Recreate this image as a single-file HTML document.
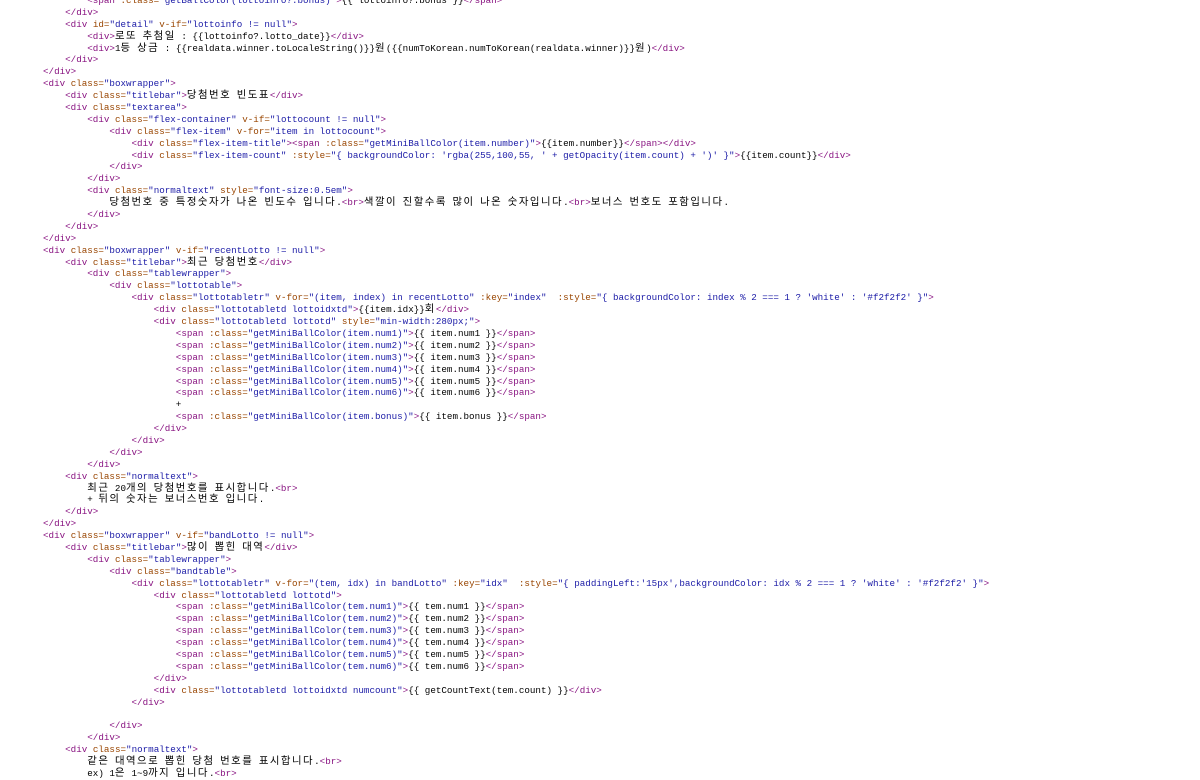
<!DOCTYPE html>
<html><head><meta charset="utf-8"><style>
html,body{margin:0;padding:0;background:#fff;width:1200px;height:772px;overflow:hidden}
pre{margin:0;position:absolute;left:43px;top:-5px;font-family:"Liberation Mono","Noto Sans CJK KR",monospace;font-size:9.22px;line-height:11.89px;color:#000;white-space:pre}
.t{color:#881280}.a{color:#994500}.v{color:#1a1aa6}
.k{font-family:"Noto Sans CJK KR",sans-serif;font-size:10.4px;line-height:1px;letter-spacing:1.5px}
</style></head><body><pre>        <span class="t">&lt;span</span> <span class="a">:class=</span><span class="v">"getBallColor(lottoinfo?.bonus)"</span><span class="t">&gt;</span>{{ lottoinfo?.bonus }}<span class="t">&lt;/span&gt;</span>
    <span class="t">&lt;/div&gt;</span>
    <span class="t">&lt;div</span> <span class="a">id=</span><span class="v">"detail"</span> <span class="a">v-if=</span><span class="v">"lottoinfo != null"</span><span class="t">&gt;</span>
        <span class="t">&lt;div&gt;</span><span class="k">로또</span> <span class="k">추첨일</span> : {{lottoinfo?.lotto_date}}<span class="t">&lt;/div&gt;</span>
        <span class="t">&lt;div&gt;</span>1<span class="k">등</span> <span class="k">상금</span> : {{realdata.winner.toLocaleString()}}<span class="k">원</span>({{numToKorean.numToKorean(realdata.winner)}}<span class="k">원</span>)<span class="t">&lt;/div&gt;</span>
    <span class="t">&lt;/div&gt;</span>
<span class="t">&lt;/div&gt;</span>
<span class="t">&lt;div</span> <span class="a">class=</span><span class="v">"boxwrapper"</span><span class="t">&gt;</span>
    <span class="t">&lt;div</span> <span class="a">class=</span><span class="v">"titlebar"</span><span class="t">&gt;</span><span class="k">당첨번호</span> <span class="k">빈도표</span><span class="t">&lt;/div&gt;</span>
    <span class="t">&lt;div</span> <span class="a">class=</span><span class="v">"textarea"</span><span class="t">&gt;</span>
        <span class="t">&lt;div</span> <span class="a">class=</span><span class="v">"flex-container"</span> <span class="a">v-if=</span><span class="v">"lottocount != null"</span><span class="t">&gt;</span>
            <span class="t">&lt;div</span> <span class="a">class=</span><span class="v">"flex-item"</span> <span class="a">v-for=</span><span class="v">"item in lottocount"</span><span class="t">&gt;</span>
                <span class="t">&lt;div</span> <span class="a">class=</span><span class="v">"flex-item-title"</span><span class="t">&gt;&lt;span</span> <span class="a">:class=</span><span class="v">"getMiniBallColor(item.number)"</span><span class="t">&gt;</span>{{item.number}}<span class="t">&lt;/span&gt;&lt;/div&gt;</span>
                <span class="t">&lt;div</span> <span class="a">class=</span><span class="v">"flex-item-count"</span> <span class="a">:style=</span><span class="v">"{ backgroundColor: 'rgba(255,100,55, ' + getOpacity(item.count) + ')' }"</span><span class="t">&gt;</span>{{item.count}}<span class="t">&lt;/div&gt;</span>
            <span class="t">&lt;/div&gt;</span>
        <span class="t">&lt;/div&gt;</span>
        <span class="t">&lt;div</span> <span class="a">class=</span><span class="v">"normaltext"</span> <span class="a">style=</span><span class="v">"font-size:0.5em"</span><span class="t">&gt;</span>
            <span class="k">당첨번호</span> <span class="k">중</span> <span class="k">특정숫자가</span> <span class="k">나온</span> <span class="k">빈도수</span> <span class="k">입니다</span>.<span class="t">&lt;br&gt;</span><span class="k">색깔이</span> <span class="k">진할수록</span> <span class="k">많이</span> <span class="k">나온</span> <span class="k">숫자입니다</span>.<span class="t">&lt;br&gt;</span><span class="k">보너스</span> <span class="k">번호도</span> <span class="k">포함입니다</span>.
        <span class="t">&lt;/div&gt;</span>
    <span class="t">&lt;/div&gt;</span>
<span class="t">&lt;/div&gt;</span>
<span class="t">&lt;div</span> <span class="a">class=</span><span class="v">"boxwrapper"</span> <span class="a">v-if=</span><span class="v">"recentLotto != null"</span><span class="t">&gt;</span>
    <span class="t">&lt;div</span> <span class="a">class=</span><span class="v">"titlebar"</span><span class="t">&gt;</span><span class="k">최근</span> <span class="k">당첨번호</span><span class="t">&lt;/div&gt;</span>
        <span class="t">&lt;div</span> <span class="a">class=</span><span class="v">"tablewrapper"</span><span class="t">&gt;</span>
            <span class="t">&lt;div</span> <span class="a">class=</span><span class="v">"lottotable"</span><span class="t">&gt;</span>
                <span class="t">&lt;div</span> <span class="a">class=</span><span class="v">"lottotabletr"</span> <span class="a">v-for=</span><span class="v">"(item, index) in recentLotto"</span> <span class="a">:key=</span><span class="v">"index"</span>  <span class="a">:style=</span><span class="v">"{ backgroundColor: index % 2 === 1 ? 'white' : '#f2f2f2' }"</span><span class="t">&gt;</span>
                    <span class="t">&lt;div</span> <span class="a">class=</span><span class="v">"lottotabletd lottoidxtd"</span><span class="t">&gt;</span>{{item.idx}}<span class="k">회</span><span class="t">&lt;/div&gt;</span>
                    <span class="t">&lt;div</span> <span class="a">class=</span><span class="v">"lottotabletd lottotd"</span> <span class="a">style=</span><span class="v">"min-width:280px;"</span><span class="t">&gt;</span>
                        <span class="t">&lt;span</span> <span class="a">:class=</span><span class="v">"getMiniBallColor(item.num1)"</span><span class="t">&gt;</span>{{ item.num1 }}<span class="t">&lt;/span&gt;</span>
                        <span class="t">&lt;span</span> <span class="a">:class=</span><span class="v">"getMiniBallColor(item.num2)"</span><span class="t">&gt;</span>{{ item.num2 }}<span class="t">&lt;/span&gt;</span>
                        <span class="t">&lt;span</span> <span class="a">:class=</span><span class="v">"getMiniBallColor(item.num3)"</span><span class="t">&gt;</span>{{ item.num3 }}<span class="t">&lt;/span&gt;</span>
                        <span class="t">&lt;span</span> <span class="a">:class=</span><span class="v">"getMiniBallColor(item.num4)"</span><span class="t">&gt;</span>{{ item.num4 }}<span class="t">&lt;/span&gt;</span>
                        <span class="t">&lt;span</span> <span class="a">:class=</span><span class="v">"getMiniBallColor(item.num5)"</span><span class="t">&gt;</span>{{ item.num5 }}<span class="t">&lt;/span&gt;</span>
                        <span class="t">&lt;span</span> <span class="a">:class=</span><span class="v">"getMiniBallColor(item.num6)"</span><span class="t">&gt;</span>{{ item.num6 }}<span class="t">&lt;/span&gt;</span>
                        +
                        <span class="t">&lt;span</span> <span class="a">:class=</span><span class="v">"getMiniBallColor(item.bonus)"</span><span class="t">&gt;</span>{{ item.bonus }}<span class="t">&lt;/span&gt;</span>
                    <span class="t">&lt;/div&gt;</span>
                <span class="t">&lt;/div&gt;</span>
            <span class="t">&lt;/div&gt;</span>
        <span class="t">&lt;/div&gt;</span>
    <span class="t">&lt;div</span> <span class="a">class=</span><span class="v">"normaltext"</span><span class="t">&gt;</span>
        <span class="k">최근</span> 20<span class="k">개의</span> <span class="k">당첨번호를</span> <span class="k">표시합니다</span>.<span class="t">&lt;br&gt;</span>
        + <span class="k">뒤의</span> <span class="k">숫자는</span> <span class="k">보너스번호</span> <span class="k">입니다</span>.
    <span class="t">&lt;/div&gt;</span>
<span class="t">&lt;/div&gt;</span>
<span class="t">&lt;div</span> <span class="a">class=</span><span class="v">"boxwrapper"</span> <span class="a">v-if=</span><span class="v">"bandLotto != null"</span><span class="t">&gt;</span>
    <span class="t">&lt;div</span> <span class="a">class=</span><span class="v">"titlebar"</span><span class="t">&gt;</span><span class="k">많이</span> <span class="k">뽑힌</span> <span class="k">대역</span><span class="t">&lt;/div&gt;</span>
        <span class="t">&lt;div</span> <span class="a">class=</span><span class="v">"tablewrapper"</span><span class="t">&gt;</span>
            <span class="t">&lt;div</span> <span class="a">class=</span><span class="v">"bandtable"</span><span class="t">&gt;</span>
                <span class="t">&lt;div</span> <span class="a">class=</span><span class="v">"lottotabletr"</span> <span class="a">v-for=</span><span class="v">"(tem, idx) in bandLotto"</span> <span class="a">:key=</span><span class="v">"idx"</span>  <span class="a">:style=</span><span class="v">"{ paddingLeft:'15px',backgroundColor: idx % 2 === 1 ? 'white' : '#f2f2f2' }"</span><span class="t">&gt;</span>
                    <span class="t">&lt;div</span> <span class="a">class=</span><span class="v">"lottotabletd lottotd"</span><span class="t">&gt;</span>
                        <span class="t">&lt;span</span> <span class="a">:class=</span><span class="v">"getMiniBallColor(tem.num1)"</span><span class="t">&gt;</span>{{ tem.num1 }}<span class="t">&lt;/span&gt;</span>
                        <span class="t">&lt;span</span> <span class="a">:class=</span><span class="v">"getMiniBallColor(tem.num2)"</span><span class="t">&gt;</span>{{ tem.num2 }}<span class="t">&lt;/span&gt;</span>
                        <span class="t">&lt;span</span> <span class="a">:class=</span><span class="v">"getMiniBallColor(tem.num3)"</span><span class="t">&gt;</span>{{ tem.num3 }}<span class="t">&lt;/span&gt;</span>
                        <span class="t">&lt;span</span> <span class="a">:class=</span><span class="v">"getMiniBallColor(tem.num4)"</span><span class="t">&gt;</span>{{ tem.num4 }}<span class="t">&lt;/span&gt;</span>
                        <span class="t">&lt;span</span> <span class="a">:class=</span><span class="v">"getMiniBallColor(tem.num5)"</span><span class="t">&gt;</span>{{ tem.num5 }}<span class="t">&lt;/span&gt;</span>
                        <span class="t">&lt;span</span> <span class="a">:class=</span><span class="v">"getMiniBallColor(tem.num6)"</span><span class="t">&gt;</span>{{ tem.num6 }}<span class="t">&lt;/span&gt;</span>
                    <span class="t">&lt;/div&gt;</span>
                    <span class="t">&lt;div</span> <span class="a">class=</span><span class="v">"lottotabletd lottoidxtd numcount"</span><span class="t">&gt;</span>{{ getCountText(tem.count) }}<span class="t">&lt;/div&gt;</span>
                <span class="t">&lt;/div&gt;</span>

            <span class="t">&lt;/div&gt;</span>
        <span class="t">&lt;/div&gt;</span>
    <span class="t">&lt;div</span> <span class="a">class=</span><span class="v">"normaltext"</span><span class="t">&gt;</span>
        <span class="k">같은</span> <span class="k">대역으로</span> <span class="k">뽑힌</span> <span class="k">당첨</span> <span class="k">번호를</span> <span class="k">표시합니다</span>.<span class="t">&lt;br&gt;</span>
        ex) 1<span class="k">은</span> 1~9<span class="k">까지</span> <span class="k">입니다</span>.<span class="t">&lt;br&gt;</span>
</pre></body></html>
